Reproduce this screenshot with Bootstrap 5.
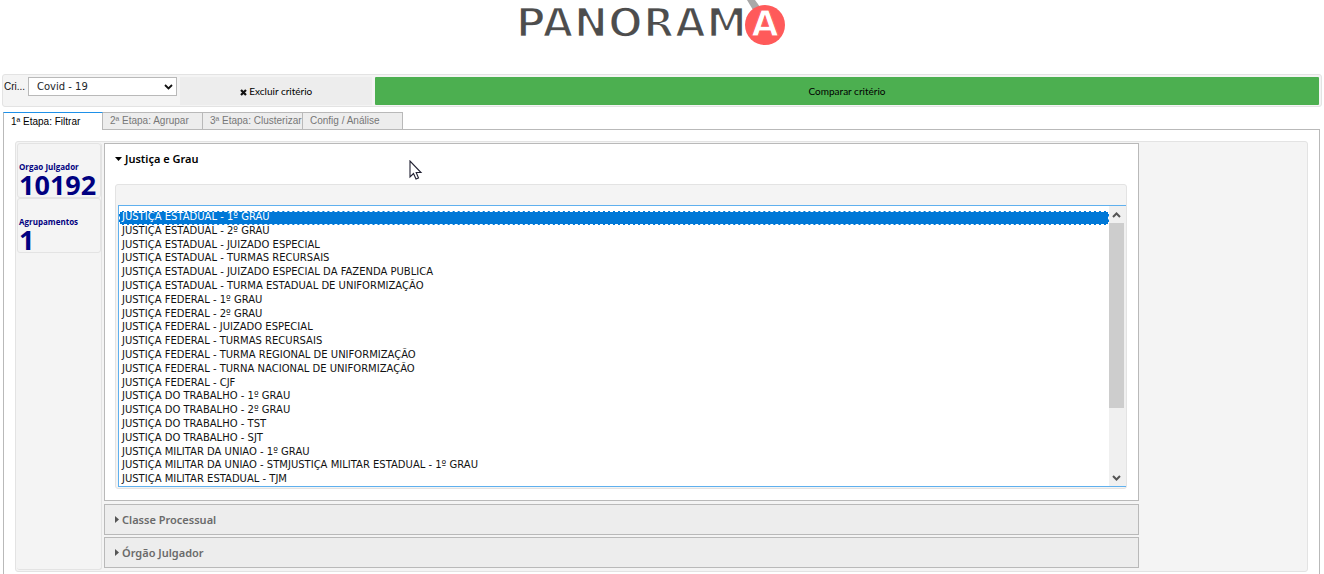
<!DOCTYPE html>
<html lang="pt-BR">
<head>
<meta charset="utf-8">
<meta name="viewport" content="width=device-width, initial-scale=1">
<title>Panorama</title>
<link rel="stylesheet" href="https://cdn.jsdelivr.net/npm/bootstrap@5.3.0/dist/css/bootstrap.min.css">
<style>
  :root { --line: #b9b9b9; --soft: #e3e3e3; --panel: #f4f4f4; --tile: #ededed; }
  body { font-family: "DejaVu Sans", sans-serif; font-size: 10px; line-height: 14px; color: #111; background: #fff; }
  .brand-bar { height: 74px; }
  .soft-panel { background: var(--panel); border: 1px solid var(--soft); border-radius: 3px; }
  .toolbar { margin: 0 2px; padding: 2px 2px 1px 1px; }
  .crit-label { width: 22px; margin: 3px 2px 0 0; font: 10px/14px "Liberation Sans", sans-serif; white-space: nowrap; }
  .crit-select { width: 149px; height: 19px; padding: 0 8px; border: 1px solid var(--line); border-radius: 0; font-size: 10px; line-height: 14px; background-position: right 3px center; background-size: 9px 9px;
    background-image: url("data:image/svg+xml,%3Csvg xmlns='http://www.w3.org/2000/svg' viewBox='0 0 9 9'%3E%3Cpath d='M1 3l3.500 3.500L8 3' fill='none' stroke='%23111' stroke-width='1.800'/%3E%3C/svg%3E"); }
  .tool-btn { height: 28px; border: 0; padding: 0; font: 10px/14px Lato, sans-serif; color: #000; }
  .tool-del { flex: 0 0 192px; background: var(--tile); margin: 0 3px; }
  .tool-cmp { background: #4caf50; border-radius: 1px; }
  .steps { margin: 5px 3px 0; border: 0; }
  .steps .nav-link { width: 100px; height: 17px; margin: 0; padding: 0 7px; border: 1px solid var(--line); border-left: 0; border-bottom: 0; border-radius: 0; background: var(--tile); color: #777; font: 10px/16px "Liberation Sans", sans-serif; text-align: left; overflow: hidden; white-space: nowrap; }
  .steps .nav-link.active { height: 18px; margin-bottom: -1px; background: #fff; color: #000; border: 1px solid var(--line); border-top-color: #1e90e8; border-bottom: 0; position: relative; }
  .tab-frame { margin: 0 4px 0 3px; padding: 11px 11px 0; border: 1px solid var(--line); border-bottom: 0; }
  .workspace { padding: 1px; gap: 2px; }
  .counts { flex: 0 0 85px; border-radius: 3px; border: 1px solid var(--soft); border-left: 0; border-top: 0; }
  .count-box { height: 55px; padding: 17px 0 0 1px; color: #000080; }
  .count-name { font: bold 8px/11px "Open Sans", sans-serif; white-space: nowrap; }
  .count-value { font: bold 27px/26px "Open Sans", sans-serif; }
  .side-space { flex: 0 0 12.8%; }
  .fold { border: 1px solid var(--line); background: #fff; margin-bottom: 3px; }
  .fold + .fold { margin-bottom: 2px; }
  .fold-btn { width: 100%; border: 0; background: var(--tile); color: #6a6a6a; height: 29px; padding: 0 10px; text-align: left; font: 600 11px/16px "Noto Sans", sans-serif; display: flex; align-items: center; gap: 3px; }
  .fold-btn.opened { background: #fff; color: #000; height: 30px; }
  .list-holder { margin: 10px 11px 11px 10px; padding: 20px 0 1px 2px; }
  .list-frame { border: 1px solid #5fb0ee; border-right: 0; background: #fff; height: 282px; }
  .court-list { border: 0; outline: 0; padding: 5px 0 0; height: 280px; overflow: hidden; font-size: 10px; color: #111; background: #fff; }
  .court-list option { height: 14px; min-height: 0; padding: 0 3px; line-height: 14px; font-size: 10px; }
  .court-list option:nth-child(5n+3) { height: 13px; }
  .court-list option:checked { background: #0078d7 linear-gradient(#0078d7, #0078d7); color: #fff; outline: 1px dashed #fff; outline-offset: -1px; }
  .scroller { flex: 0 0 17px; background: #f0f0f0; }
  .scroller svg { display: block; width: 15px; height: 17px; }
  .scroller-thumb { background: #cdcdcd; width: 15px; height: 185px; }
  .pointer { position: absolute; left: 305px; top: 17px; }
</style>
</head>
<body class="min-vh-100 d-flex flex-column">
<header class="brand-bar d-flex justify-content-center">
  <svg width="314" height="60" viewBox="0 0 314 60" role="img" aria-label="Panorama">
    <path d="M242 0h8l8 11-7 4z" fill="#a9a9a9"/>
    <text x="242" y="37" text-anchor="end" font-family="DejaVu Sans" font-weight="bold" font-size="41" fill="#4d4d4d" stroke="#fff" stroke-width="2.600">PANORAM</text>
    <circle cx="260" cy="25" r="20" fill="#ff5a5a"/>
    <text x="260" y="36" text-anchor="middle" font-family="DejaVu Sans" font-weight="bold" font-size="35" fill="#fff" stroke="#ff5a5a" stroke-width="1">A</text>
  </svg>
</header>

<form class="toolbar soft-panel d-flex align-items-start" onsubmit="return false">
  <label class="crit-label" for="criterio" title="Critério">Cri...</label>
  <select id="criterio" class="crit-select form-select"><option>Covid - 19</option></select>
  <button type="button" class="tool-btn tool-del">
    <svg width="7" height="7" viewBox="0 0 7 7" aria-hidden="true"><path d="M1 1l5 5M6 1L1 6" stroke="#111" stroke-width="2.200"/></svg>
    Excluir critério</button>
  <button type="button" class="tool-btn tool-cmp flex-grow-1">Comparar critério</button>
</form>

<ul class="steps nav nav-tabs" role="tablist">
  <li class="nav-item"><button class="nav-link active" role="tab" aria-selected="true">1ª Etapa: Filtrar</button></li>
  <li class="nav-item"><button class="nav-link" role="tab">2ª Etapa: Agrupar</button></li>
  <li class="nav-item"><button class="nav-link" role="tab">3ª Etapa: Clusterizar</button></li>
  <li class="nav-item"><button class="nav-link" role="tab">Config / Análise</button></li>
</ul>

<main class="tab-frame flex-grow-1">
  <div class="workspace soft-panel d-flex">
    <aside class="counts">
      <div class="count-box soft-panel"><div class="count-name">Orgao Julgador</div><div class="count-value">10192</div></div>
      <div class="count-box soft-panel"><div class="count-name">Agrupamentos</div><div class="count-value">1</div></div>
    </aside>
    <div class="flex-grow-1 position-relative">
      <section class="fold">
        <button class="fold-btn opened" aria-expanded="true"><svg width="7" height="5" viewBox="0 0 7 5"><path d="M0 0h7L3.500 4z"/></svg>Justiça e Grau</button>
        <div class="list-holder soft-panel">
          <div class="list-frame d-flex">
            <select class="court-list flex-grow-1" multiple size="20" aria-label="Justiça e Grau">
              <option selected>JUSTIÇA ESTADUAL - 1º GRAU</option>
              <option>JUSTIÇA ESTADUAL - 2º GRAU</option>
              <option>JUSTIÇA ESTADUAL - JUIZADO ESPECIAL</option>
              <option>JUSTIÇA ESTADUAL - TURMAS RECURSAIS</option>
              <option>JUSTIÇA ESTADUAL - JUIZADO ESPECIAL DA FAZENDA PUBLICA</option>
              <option>JUSTIÇA ESTADUAL - TURMA ESTADUAL DE UNIFORMIZAÇÃO</option>
              <option>JUSTIÇA FEDERAL - 1º GRAU</option>
              <option>JUSTIÇA FEDERAL - 2º GRAU</option>
              <option>JUSTIÇA FEDERAL - JUIZADO ESPECIAL</option>
              <option>JUSTIÇA FEDERAL - TURMAS RECURSAIS</option>
              <option>JUSTIÇA FEDERAL - TURMA REGIONAL DE UNIFORMIZAÇÃO</option>
              <option>JUSTIÇA FEDERAL - TURNA NACIONAL DE UNIFORMIZAÇÃO</option>
              <option>JUSTIÇA FEDERAL - CJF</option>
              <option>JUSTIÇA DO TRABALHO - 1º GRAU</option>
              <option>JUSTIÇA DO TRABALHO - 2º GRAU</option>
              <option>JUSTIÇA DO TRABALHO - TST</option>
              <option>JUSTIÇA DO TRABALHO - SJT</option>
              <option>JUSTIÇA MILITAR DA UNIAO - 1º GRAU</option>
              <option>JUSTIÇA MILITAR DA UNIAO - STMJUSTIÇA MILITAR ESTADUAL - 1º GRAU</option>
              <option>JUSTIÇA MILITAR ESTADUAL - TJM</option>
            </select>
            <div class="scroller d-flex flex-column" aria-hidden="true">
              <svg viewBox="0 0 15 17"><path d="M4 11l3.500-3.500L11 11" fill="none" stroke="#555" stroke-width="2"/></svg>
              <div class="scroller-thumb"></div>
              <svg class="mt-auto" viewBox="0 0 15 17"><path d="M4 7l3.500 3.500L11 7" fill="none" stroke="#555" stroke-width="2"/></svg>
            </div>
          </div>
        </div>
      </section>
      <section class="fold"><button class="fold-btn" aria-expanded="false"><svg width="4" height="7" viewBox="0 0 4 7"><path d="M0 0v7l4-3.500z" fill="#555"/></svg>Classe Processual</button></section>
      <section class="fold"><button class="fold-btn" aria-expanded="false"><svg width="4" height="7" viewBox="0 0 4 7"><path d="M0 0v7l4-3.500z" fill="#555"/></svg>Órgão Julgador</button></section>
      <svg class="pointer" width="14" height="20" viewBox="0 0 14 20" aria-hidden="true"><path d="M1 1v16l3.500-3.500L7 19l2.500-1L7.200 12.500H12z" fill="#fff" stroke="#223" stroke-width="1.100"/></svg>
    </div>
    <div class="side-space"></div>
  </div>
</main>
<script src="https://cdn.jsdelivr.net/npm/bootstrap@5.3.0/dist/js/bootstrap.bundle.min.js"></script>
</body>
</html>
